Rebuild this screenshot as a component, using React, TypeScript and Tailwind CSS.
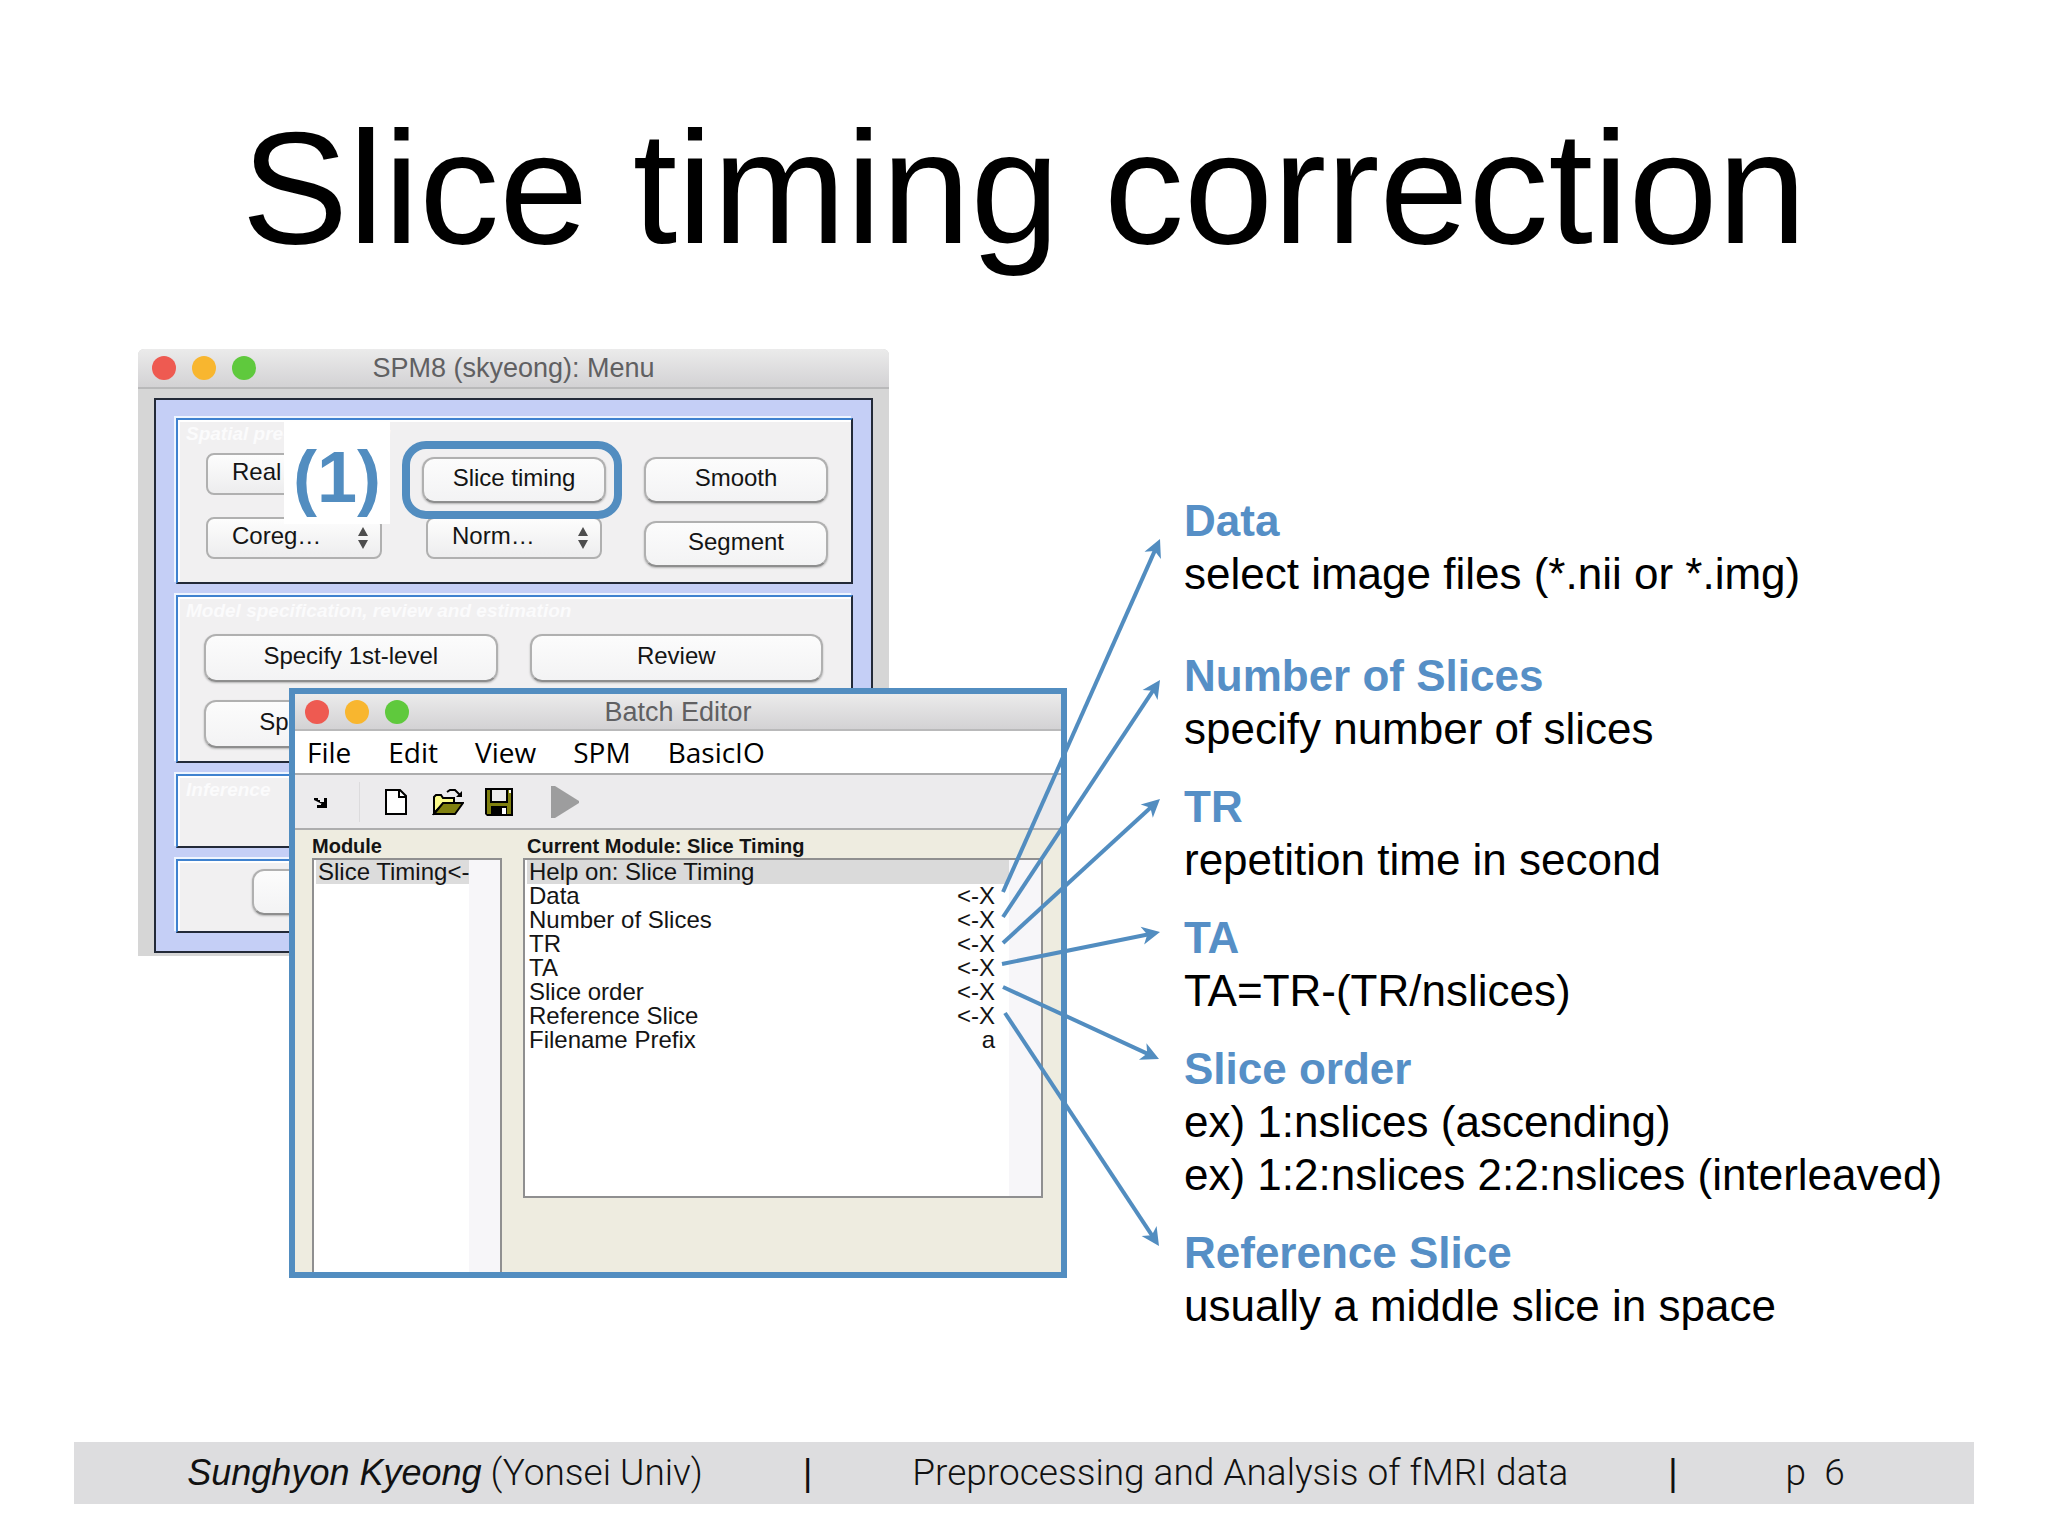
import React, { ReactElement, ReactNode } from "react";
import clsx from "clsx";

interface Note {
  title: string;
  lines: string[];
  className?: string;
}

const NOTES: Note[] = [
  {
    title: "Data",
    lines: ["select image files (*.nii or *.img)"],
    className: "mb-6",
  },
  { title: "Number of Slices", lines: ["specify number of slices"] },
  { title: "TR", lines: ["repetition time in second"] },
  { title: "TA", lines: ["TA=TR-(TR/nslices)"] },
  {
    title: "Slice order",
    lines: [
      "ex) 1:nslices (ascending)",
      "ex) 1:2:nslices 2:2:nslices (interleaved)",
    ],
  },
  { title: "Reference Slice", lines: ["usually a middle slice in space"] },
];

const MODULE_ROWS = [
  ["Data", "<-X"],
  ["Number of Slices", "<-X"],
  ["TR", "<-X"],
  ["TA", "<-X"],
  ["Slice order", "<-X"],
  ["Reference Slice", "<-X"],
  ["Filename Prefix", "a"],
];

// start and end of each arrow, measured from the figure's top left corner
const ARROWS = [
  [865, 543, 1022, 190],
  [865, 568, 1022, 331],
  [865, 594, 1022, 450],
  [864, 615, 1022, 583],
  [865, 638, 1021, 710],
  [867, 664, 1021, 897],
];

function TrafficLights(): ReactElement {
  return (
    <div className="flex gap-4">
      <span className="h-6 w-6 rounded-full bg-[#ee5a51]" />
      <span className="h-6 w-6 rounded-full bg-[#f8b62f]" />
      <span className="h-6 w-6 rounded-full bg-[#5fc93d]" />
    </div>
  );
}

interface TitleBarProps {
  title: string;
  className?: string;
}

function TitleBar({ title, className }: TitleBarProps): ReactElement {
  return (
    <div
      className={clsx(
        "grid grid-cols-[1fr_auto_1fr] items-center border-b-2 border-[#b9b9ba] bg-linear-to-b from-[#ebebeb] to-[#d3d2d4]",
        className
      )}
    >
      <TrafficLights />
      <h2 className="text-[27px] leading-8 text-[#606062]">{title}</h2>
    </div>
  );
}

interface PanelProps {
  label?: string;
  className?: string;
  children?: ReactNode;
}

function Panel({ label, className, children }: PanelProps): ReactElement {
  return (
    <section
      className={clsx(
        "border-2 border-t-[#3f82cf] border-r-[#232a38] border-b-[#232a38] border-l-[#3f82cf] bg-[#f1f0f1] shadow-[-2px_-2px_0_#eef5ff,inset_2px_2px_0_#fff]",
        className
      )}
    >
      {label ? (
        <h3 className="h-[33px] pl-2 text-[19px] leading-7 font-bold text-[#fbfbfc] italic">
          {label}
        </h3>
      ) : null}
      {children}
    </section>
  );
}

interface SpmButtonProps {
  children?: ReactNode;
  label?: string;
  className?: string;
}

function SpmButton({
  children,
  label,
  className,
}: SpmButtonProps): ReactElement {
  return (
    <button
      type="button"
      aria-label={label}
      className={clsx(
        "shrink-0 rounded-xl border-2 border-[#b0b0b0] border-b-[#8e8e8e] bg-linear-to-b from-[#fcfcfc] to-[#f3f3f4] pb-1 text-[24px] leading-8 text-[#141414] shadow-[0_1px_2px_#00000040]",
        className
      )}
    >
      {children}
    </button>
  );
}

function SpmSelect({ name }: { name: string }): ReactElement {
  return (
    <div className="relative h-[42px] w-44">
      <select
        aria-label={name}
        className="h-full w-full appearance-none rounded-lg border-2 border-[#b0b0b0] bg-linear-to-b from-[#fdfdfd] to-[#ededee] pb-1 pl-6 text-[24px] leading-8 text-[#141414]"
      >
        <option>{name}</option>
      </select>
      <svg
        viewBox="0 0 10 22"
        className="pointer-events-none absolute top-2.5 right-3.5 h-[22px] w-2.5"
        fill="#4d4d4d"
      >
        <path d="M5 0 10 9H0zM5 22 0 13h10z" />
      </svg>
    </div>
  );
}

function SpmMenuWindow(): ReactElement {
  return (
    <div className="h-[607px] w-[751px] rounded-t-md bg-[#d6d6d6]">
      <TitleBar
        title="SPM8 (skyeong): Menu"
        className="h-10 rounded-t-md px-3.5"
      />
      <div className="mx-4 mt-[9px] flex h-[555px] flex-col gap-[11px] border-2 border-[#232a38] bg-[#c5cff6] pt-[18px] pr-[18px] pl-5">
        <Panel label="Spatial pre-processing" className="h-[166px]">
          <div className="flex items-start pl-7">
            <div className="flex flex-col gap-[22px]">
              <SpmSelect name="Real…" />
              <SpmSelect name="Coreg…" />
            </div>
            <div className="ml-10 flex flex-col items-center gap-3.5 pt-1">
              <div className="relative">
                <SpmButton className="h-[46px] w-46">Slice timing</SpmButton>
                <span className="pointer-events-none absolute -top-4 -right-4 -bottom-4 -left-5 z-10 rounded-[24px] border-8 border-[#528dc0]" />
              </div>
              <SpmSelect name="Norm…" />
            </div>
            <div className="ml-[38px] flex flex-col gap-[18px] pt-1">
              <SpmButton className="h-[46px] w-46">Smooth</SpmButton>
              <SpmButton className="h-[46px] w-46">Segment</SpmButton>
            </div>
          </div>
        </Panel>
        <Panel
          label="Model specification, review and estimation"
          className="h-[168px]"
        >
          <div className="grid grid-cols-2 gap-x-8 gap-y-[18px] pt-1 pr-7 pl-[26px]">
            <SpmButton className="h-12">Specify 1st-level</SpmButton>
            <SpmButton className="h-12">Review</SpmButton>
            <SpmButton className="h-12">Specify 2nd-level</SpmButton>
            <SpmButton className="h-12">Estimate</SpmButton>
          </div>
        </Panel>
        <Panel label="Inference" className="h-[74px]" />
        <Panel className="h-[74px] px-[74px] pt-2">
          <SpmButton label="Display" className="h-[46px] w-32" />
        </Panel>
      </div>
    </div>
  );
}

function Toolbar(): ReactElement {
  return (
    <div className="flex h-[55px] items-center border-b-2 border-[#adadae] bg-[#ecebed] pl-4">
      <button type="button" aria-label="Dock">
        <svg viewBox="0 0 20 16" className="h-4 w-5">
          <path
            d="M3 6V4h4v2h2v2h2v2M5 4h2v2h2v2h4V4h3v10H6v-3h4V9H8V7H5z"
            fill="#000"
          />
        </svg>
      </button>
      <span className="ml-7 h-10 w-px bg-[#dcdbdd]" />
      <button type="button" aria-label="New" className="ml-6">
        <svg viewBox="0 0 24 28" className="h-7 w-6">
          <path d="M2 2h14l6 6v18H2z" fill="#fff" stroke="#000" strokeWidth="2" />
          <path d="M15 2v7h7" fill="none" stroke="#000" strokeWidth="2" />
        </svg>
      </button>
      <button type="button" aria-label="Open" className="ml-6">
        <svg viewBox="0 0 32 28" className="h-7 w-8" strokeWidth="2">
          <path
            d="M2 25V9l2-2h5l2 3h11v5H12z"
            fill="#fbfb8c"
            stroke="#000"
          />
          <path d="M2 26 11 15h20l-8 11z" fill="#80800f" stroke="#000" />
          <path d="M15 4l3-2h5l5 5" fill="none" stroke="#000" />
          <path d="M30 3v6h-6z" fill="#000" />
        </svg>
      </button>
      <button type="button" aria-label="Save" className="ml-5">
        <svg viewBox="0 0 30 28" className="h-7 w-[30px]">
          <path d="M1 0h28v28H3l-2-2z" fill="#000" />
          <path d="M3 2h3v13h18V2h3v24h-4v-8H7v8H3z" fill="#80800f" />
          <path d="M8 2h14v11H8z" fill="#ecebed" />
          <path d="M25 2h2v3h-2zM18 20h4v6h-4z" fill="#fff" />
        </svg>
      </button>
      <button type="button" aria-label="Run" className="ml-9">
        <svg viewBox="0 0 30 32" className="h-8 w-[30px]">
          <path d="M1 0h4l24 15v2L5 32H1z" fill="#9d9d9e" />
        </svg>
      </button>
    </div>
  );
}

function BatchEditorWindow(): ReactElement {
  return (
    <div className="flex h-[590px] w-[778px] flex-col border-6 border-[#528dc0] bg-[#eeece0]">
      <TitleBar title="Batch Editor" className="h-[37px] px-2.5" />
      <nav className="flex h-11 items-center gap-[37px] border-b-2 border-[#adadae] bg-white px-3 font-['Open_Sans','Noto_Sans',sans-serif] text-[28px] leading-10 font-medium text-black">
        <button type="button">File</button>
        <button type="button">Edit</button>
        <button type="button">View</button>
        <button type="button">SPM</button>
        <button type="button">BasicIO</button>
      </nav>
      <Toolbar />
      <div className="flex min-h-0 flex-1 gap-[21px] pt-1 pr-[18px] pl-[17px] text-[#141414]">
        <section className="flex w-[190px] flex-col">
          <h3 className="text-[20px] leading-6 font-bold">Module</h3>
          <div className="flex flex-1 border-2 border-b-0 border-[#8f8f90] bg-white pl-0.5">
            <ul className="flex-1 text-[24px] leading-6">
              <li className="bg-[#dcdcdc] pl-0.5 whitespace-nowrap">
                Slice Timing&lt;-
              </li>
            </ul>
            <div className="w-8 bg-[#f7f6f9]" />
          </div>
        </section>
        <section className="flex flex-1 flex-col">
          <h3 className="pl-1 text-[20px] leading-6 font-bold">
            Current Module: Slice Timing
          </h3>
          <div className="flex h-[340px] border-2 border-[#8f8f90] bg-white pl-0.5">
            <ul className="flex-1 text-[24px] leading-6">
              <li className="bg-[#dadada] pl-0.5">Help on: Slice Timing</li>
              {MODULE_ROWS.map(([name, value]) => (
                <li key={name} className="flex justify-between pr-3.5 pl-0.5">
                  <span>{name}</span>
                  <span>{value}</span>
                </li>
              ))}
            </ul>
            <div className="w-8 bg-[#f7f6f9]" />
          </div>
        </section>
      </div>
    </div>
  );
}

function Arrows(): ReactElement {
  return (
    <svg
      viewBox="0 0 1029 929"
      className="pointer-events-none absolute top-0 left-0 h-[929px] w-[1029px] max-w-none"
    >
      <defs>
        <marker
          id="head"
          markerUnits="userSpaceOnUse"
          markerWidth="20"
          markerHeight="20"
          refX="19"
          refY="10"
          orient="auto"
        >
          <path d="M19 10 1 1l5 9-5 9z" fill="#528dc0" />
        </marker>
      </defs>
      {ARROWS.map(([x1, y1, x2, y2]) => {
        // the shaft stops short so that the head keeps a sharp tip
        const length = Math.hypot(x2 - x1, y2 - y1);
        const t = (length - 10) / length;
        return (
          <g key={y1} stroke="#528dc0">
            <line
              x1={x1}
              y1={y1}
              x2={x1 + (x2 - x1) * t}
              y2={y1 + (y2 - y1) * t}
              strokeWidth="4"
            />
            <line
              x1={x1}
              y1={y1}
              x2={x2}
              y2={y2}
              strokeWidth="0"
              markerEnd="url(#head)"
            />
          </g>
        );
      })}
    </svg>
  );
}

function Figure(): ReactElement {
  return (
    <div className="relative h-[929px] w-[929px] shrink-0">
      <SpmMenuWindow />
      <span className="absolute top-[73px] left-[146px] flex h-[102px] w-[106px] items-center justify-center bg-white pt-2 text-[72px] leading-none font-bold text-[#528dc0]">
        (1)
      </span>
      <div className="absolute top-[339px] left-[151px]">
        <BatchEditorWindow />
      </div>
      <Arrows />
    </div>
  );
}

function Divider(): ReactElement {
  return (
    <span className="font-['Liberation_Sans',sans-serif] text-[36px] font-normal">
      |
    </span>
  );
}

function Footer(): ReactElement {
  return (
    <footer className="mx-[74px] mt-auto mb-8 flex h-[62px] items-center justify-center gap-[100px] bg-[#dddddf] pr-4 font-['Roboto','Liberation_Sans',sans-serif] text-[37px] leading-10 font-light text-[#111]">
      <p>
        <em className="font-['Liberation_Sans',sans-serif] text-[36px] font-normal">
          Sunghyon Kyeong
        </em>{" "}
        (Yonsei Univ)
      </p>
      <Divider />
      <p>Preprocessing and Analysis of fMRI data</p>
      <Divider />
      <p className="pl-2 whitespace-pre">p  6</p>
    </footer>
  );
}

function App(): ReactElement {
  return (
    <div className="flex min-h-screen flex-col bg-white pt-[108px] font-['Liberation_Sans',Arial,sans-serif] text-black">
      <h1 className="text-center text-[160px] leading-none">
        Slice timing correction
      </h1>
      <main className="mt-[81px] flex gap-[117px] pl-[138px]">
        <Figure />
        <dl className="flex flex-1 flex-col gap-[25px] pt-[145px] text-[44px] leading-[53px]">
          {NOTES.map(({ title, lines, className }) => (
            <div key={title} className={className}>
              <dt className="font-bold text-[#568fc6]">{title}</dt>
              {lines.map((line) => (
                <dd key={line} className="whitespace-nowrap">
                  {line}
                </dd>
              ))}
            </div>
          ))}
        </dl>
      </main>
      <Footer />
    </div>
  );
}

export default App;
